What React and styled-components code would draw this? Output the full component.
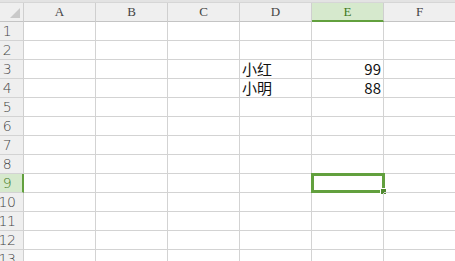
import React from 'react'
import styled, { createGlobalStyle } from 'styled-components'

const GlobalStyle = createGlobalStyle`
  html, body {
    margin: 0;
    padding: 0;
    background: #fff;
    overflow: hidden;
  }
`

const GREEN = '#62a03e'
const cols = ['A', 'B', 'C', 'D', 'E', 'F']
const rows = [1, 2, 3, 4, 5, 6, 7, 8, 9, 10, 11, 12, 13]
const data = {
  '3D': '小红', '3E': '99',
  '4D': '小明', '4E': '88',
}
const activeCol = 'E'
const activeRow = 9

const Page = styled.div`
  width: 455px;
  height: 261px;
  overflow: hidden;
`

const TopStrip = styled.div`
  height: 3px;
  background: #e3e3e3;
  border-bottom: 1px solid #d6d6d6;
  box-sizing: border-box;
`

const Sheet = styled.div`
  display: grid;
  grid-template-columns: 32px repeat(6, 72px);
  grid-auto-rows: 19px;
  margin-left: -8px;
  width: 500px;
`

const Corner = styled.div`
  height: 19px;
  background: #efefef;
  border-right: 1px solid #cfcfcf;
  border-bottom: 1px solid #c4c4c4;
  box-sizing: border-box;
  display: flex;
  align-items: flex-end;
  justify-content: flex-end;
  padding: 0 3px 3px 0;
`

const ColHead = styled.div`
  height: 19px;
  box-sizing: border-box;
  background: ${p => (p.$active ? '#d6e9cd' : '#efefef')};
  border-right: 1px solid #cfcfcf;
  border-bottom: ${p => (p.$active ? `2px solid ${GREEN}` : '1px solid #c4c4c4')};
  color: ${p => (p.$active ? '#3d7a22' : '#444')};
  font-family: "Liberation Serif", "DejaVu Serif", serif;
  font-size: 13px;
  display: flex;
  align-items: center;
  justify-content: center;
  padding-top: ${p => (p.$active ? '1px' : '0')};
`

const RowHead = styled.div`
  box-sizing: border-box;
  background: ${p => (p.$active ? '#d6e9cd' : '#efefef')};
  border-right: ${p => (p.$active ? `2px solid ${GREEN}` : '1px solid #cfcfcf')};
  border-bottom: 1px solid #d3d3d3;
  color: ${p => (p.$active ? '#3d7a22' : '#444')};
  font-family: "DejaVu Sans", "Liberation Sans", sans-serif;
  font-weight: 300;
  font-size: 14px;
  letter-spacing: -0.5px;
  display: flex;
  align-items: center;
  justify-content: center;
  padding-right: ${p => (p.$active ? '0' : '1px')};
`

const Cell = styled.div`
  position: relative;
  box-sizing: border-box;
  border-right: 1px solid #d3d3d3;
  border-bottom: 1px solid #d3d3d3;
  padding: 0 2px 0 2px;
  font-family: "Noto Sans CJK SC", "DejaVu Sans", sans-serif;
  font-size: 15px;
  line-height: 18px;
  color: #111;
  display: flex;
  align-items: flex-end;
  justify-content: ${p => (p.$num ? 'flex-end' : 'flex-start')};
  white-space: nowrap;
`

const Selection = styled.div`
  position: absolute;
  left: -1px;
  top: -1px;
  right: -2px;
  bottom: -1px;
  border: 3px solid ${GREEN};
  pointer-events: none;

  &::after {
    content: '';
    position: absolute;
    right: -5px;
    bottom: -5px;
    width: 5px;
    height: 5px;
    background: #4f8a2f;
    border: 1px solid #fff;
  }
`

const App = () => {
  return (
    <Page>
      <GlobalStyle />
      <TopStrip />
      <Sheet>
        <Corner>
          <svg width="10" height="10" viewBox="0 0 10 10">
            <polygon points="10,0 10,10 0,10" fill="#c9c9c9" />
          </svg>
        </Corner>
        {cols.map(c => (
          <ColHead key={c} $active={c === activeCol}>{c}</ColHead>
        ))}
        {rows.map(r => (
          <React.Fragment key={r}>
            <RowHead $active={r === activeRow}>{r}</RowHead>
            {cols.map(c => {
              const v = data[`${r}${c}`]
              const isNum = v !== undefined && !isNaN(Number(v))
              return (
                <Cell key={c} $num={isNum}>
                  {v}
                  {r === activeRow && c === activeCol && <Selection />}
                </Cell>
              )
            })}
          </React.Fragment>
        ))}
      </Sheet>
    </Page>
  )
}

export default App
